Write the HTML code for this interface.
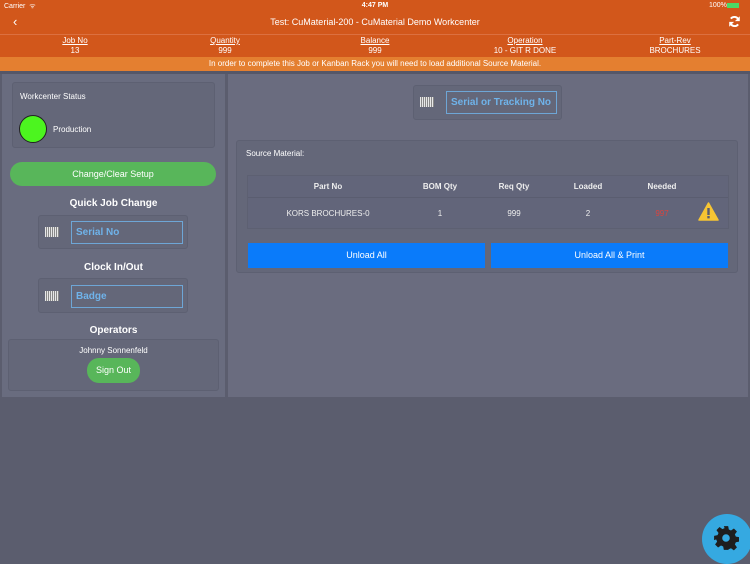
<!DOCTYPE html>
<html><head><style>
*{box-sizing:border-box;margin:0;padding:0}
body{width:750px;height:562px;background:#5b5d6e;font-family:"Liberation Sans",sans-serif;position:relative;overflow:hidden;color:#fff}
.a{position:absolute}
.hdr{left:0;top:0;width:750px;height:57px;background:#d2571b}
.c{text-align:center}
.box{background:#646779;border:1px solid #5d6072;border-radius:3px}
.inp{border:1px solid #6ea6d6;color:#6fb3ea;font-size:10px;font-weight:bold;padding-left:4px;display:flex;align-items:center}
.bc{width:14px;height:10px;background:repeating-linear-gradient(90deg,#e8e8e8 0 1px,#888 1px 2px)}
</style></head><body>
<div class="a hdr"></div>
<div class="a" style="left:4px;top:2px;font-size:7px">Carrier ︎ ᯤ</div>
<div class="a c" style="left:0;width:750px;top:2px;font-size:7px;font-weight:bold">4:47 PM</div>
<div class="a" style="left:709px;top:2px;font-size:7px">100%</div>
<div class="a" style="left:727px;top:3px;width:12px;height:5px;background:#4cd964"></div>
<div class="a" style="left:13px;top:14px;font-size:13px">‹</div>
<div class="a c" style="left:0;width:750px;top:17px;font-size:9px">Test: CuMaterial-200 - CuMaterial Demo Workcenter</div>
<svg class="a" style="left:728px;top:15px" width="13" height="13" viewBox="0 0 16 16"><path d="M13 6A5.5 5.5 0 0 0 3.5 4.5M3 10a5.5 5.5 0 0 0 9.5 1.5" stroke="#fff" stroke-width="2.4" fill="none"/><path d="M14.5 1.5v6h-6zM1.5 14.5v-6h6z" fill="#fff"/></svg>
<div class="a" style="left:0;top:34px;width:750px;height:1px;background:#dc7040"></div>
<div class="a" style="left:0;top:36px;width:750px;font-size:8px;line-height:10px">
<div class="a c" style="left:25px;width:100px"><u>Job No</u><br>13</div>
<div class="a c" style="left:175px;width:100px"><u>Quantity</u><br>999</div>
<div class="a c" style="left:325px;width:100px"><u>Balance</u><br>999</div>
<div class="a c" style="left:450px;width:150px"><u>Operation</u><br>10 - GIT R DONE</div>
<div class="a c" style="left:600px;width:150px"><u>Part-Rev</u><br>BROCHURES</div>
</div>
<div class="a c" style="left:0;top:57px;width:750px;height:14px;background:#e47f30;font-size:8px;line-height:14px">In order to complete this Job or Kanban Rack you will need to load additional Source Material.</div>
<div class="a" style="left:0;top:71px;width:750px;height:3px;background:#555768"></div>

<div class="a" style="left:2px;top:74px;width:223px;height:323px;background:#696c7f"></div>
<div class="a box" style="left:12px;top:82px;width:203px;height:66px"></div>
<div class="a" style="left:20px;top:92px;font-size:8px">Workcenter Status</div>
<div class="a" style="left:19px;top:115px;width:28px;height:28px;border-radius:50%;background:#4cf51f;border:1px solid #222"></div>
<div class="a" style="left:53px;top:125px;font-size:8px">Production</div>
<div class="a c" style="left:10px;top:162px;width:206px;height:24px;border-radius:12px;background:#58b65a;font-size:9px;line-height:24px">Change/Clear Setup</div>
<div class="a c" style="left:0;width:227px;top:198px;font-size:10px;font-weight:bold">Quick Job Change</div>
<div class="a box" style="left:38px;top:215px;width:150px;height:34px"></div>
<div class="a bc" style="left:45px;top:227px"></div>
<div class="a inp" style="left:71px;top:221px;width:112px;height:23px">Serial No</div>
<div class="a c" style="left:0;width:227px;top:262px;font-size:10px;font-weight:bold">Clock In/Out</div>
<div class="a box" style="left:38px;top:278px;width:150px;height:35px"></div>
<div class="a bc" style="left:45px;top:291px"></div>
<div class="a inp" style="left:71px;top:285px;width:112px;height:23px">Badge</div>
<div class="a c" style="left:0;width:227px;top:325px;font-size:10px;font-weight:bold">Operators</div>
<div class="a box" style="left:8px;top:339px;width:211px;height:52px"></div>
<div class="a c" style="left:0;width:227px;top:346px;font-size:8px">Johnny Sonnenfeld</div>
<div class="a c" style="left:87px;top:358px;width:53px;height:25px;border-radius:12px;background:#58b65a;font-size:9px;line-height:25px">Sign Out</div>

<div class="a" style="left:228px;top:74px;width:520px;height:323px;background:#6a6c7f"></div>
<div class="a box" style="left:413px;top:85px;width:149px;height:35px"></div>
<div class="a bc" style="left:420px;top:97px"></div>
<div class="a inp" style="left:446px;top:91px;width:111px;height:23px">Serial or Tracking No</div>
<div class="a box" style="left:236px;top:140px;width:502px;height:133px"></div>
<div class="a" style="left:246px;top:149px;font-size:8px">Source Material:</div>
<div class="a" style="left:247px;top:175px;width:482px;height:54px;background:#62657a;border:1px solid #5d6072"></div>
<div class="a" style="left:248px;top:197px;width:480px;height:1px;background:#5a5d70"></div>
<div class="a" style="left:0;top:182px;font-size:8px;font-weight:bold;color:#eee">
<div class="a c" style="left:278px;width:100px">Part No</div>
<div class="a c" style="left:390px;width:100px">BOM Qty</div>
<div class="a c" style="left:464px;width:100px">Req Qty</div>
<div class="a c" style="left:538px;width:100px">Loaded</div>
<div class="a c" style="left:612px;width:100px">Needed</div>
</div>
<div class="a" style="left:0;top:209px;font-size:8px;color:#eee">
<div class="a c" style="left:278px;width:100px">KORS BROCHURES-0</div>
<div class="a c" style="left:390px;width:100px">1</div>
<div class="a c" style="left:464px;width:100px">999</div>
<div class="a c" style="left:538px;width:100px">2</div>
<div class="a c" style="left:612px;width:100px;color:#d9443f">997</div>
</div>
<svg class="a" style="left:698px;top:202px" width="21" height="19" viewBox="0 0 21 19"><path d="M10.5 1L20 18H1z" fill="#f7c533" stroke="#f7c533" stroke-linejoin="round" stroke-width="1.5"/><rect x="9.3" y="6" width="2.4" height="7" fill="#5b5d6e"/><rect x="9.3" y="14" width="2.4" height="2.4" fill="#5b5d6e"/></svg>
<div class="a c" style="left:248px;top:243px;width:237px;height:25px;background:#0a7bfa;font-size:9px;line-height:25px">Unload All</div>
<div class="a c" style="left:491px;top:243px;width:237px;height:25px;background:#0a7bfa;font-size:9px;line-height:25px">Unload All &amp; Print</div>

<div class="a" style="left:702px;top:514px;width:50px;height:50px;border-radius:50%;background:#35a9e1"></div>
<svg class="a" style="left:713px;top:525px" width="26" height="26" viewBox="0 0 24 24"><path fill="#1e1e1e" d="M10 1h4l.6 3.2 2 .9 2.7-1.9 2.8 2.8-1.9 2.7.9 2 3.2.6v4l-3.2.6-.9 2 1.9 2.7-2.8 2.8-2.7-1.9-2 .9L14 23h-4l-.6-3.2-2-.9-2.7 1.9-2.8-2.8 1.9-2.7-.9-2L1 14v-4l3.2-.6.9-2L3.2 4.7 6 1.9l2.7 1.9 2-.9zM12 8.5a3.5 3.5 0 1 0 0 7 3.5 3.5 0 0 0 0-7z"/></svg>
</body></html>
